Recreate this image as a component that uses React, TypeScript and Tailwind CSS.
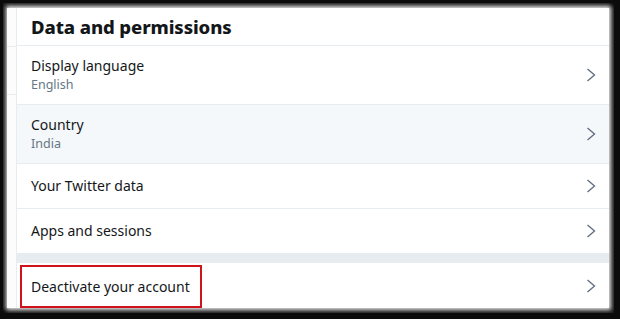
const rows = [
  { title: "Display language", sub: "English", tall: true },
  { title: "Country", sub: "India", tall: true, active: true },
  { title: "Your Twitter data" },
  { title: "Apps and sessions" },
];

const Chevron = () => (
  <svg width="10" height="14" viewBox="0 0 10 14" fill="none" className="shrink-0">
    <polyline points="1.5,1 8.5,7 1.5,13" stroke="#657080" strokeWidth="1.4" />
  </svg>
);

const App = () => {
  return (
    <div className="w-[620px] h-[319px] bg-[#0b0b0b] pt-[3px] pl-[3px] pr-[6px] pb-[6px] flex font-['Noto_Sans',sans-serif]">
      <div className="flex-1 flex bg-[#efefef] pt-[5px] pl-[4px] pr-[5px] pb-[5px] shadow-[inset_3px_3px_4px_rgba(0,0,0,0.9),inset_-3px_-3px_4px_rgba(0,0,0,0.9)] overflow-hidden">
        {/* left page strip */}
        <div className="w-[9px] bg-[#fcfcfc] flex flex-col">
          <div className="h-[39px] border-b border-[#e6ecf0]" />
          <div className="h-[48px] border-b border-[#e6ecf0]" />
        </div>

        {/* panel */}
        <div className="flex-1 flex flex-col bg-white border-l border-[#e6ecf0]">
          <div className="h-[38px] flex items-center px-[14px] border-b border-[#e6ecf0]">
            <h2 className="text-[18.5px] font-extrabold text-[#14171a] tracking-[-0.1px]">Data and permissions</h2>
          </div>

          {rows.map((r) => (
            <div
              key={r.title}
              className={`flex items-center justify-between pl-[14px] pr-[13px] border-b border-[#e6ecf0] ${
                r.tall ? "h-[59px]" : "h-[45px]"
              } ${r.active ? "bg-[#f5f8fa]" : "bg-white"}`}
            >
              <div className="flex flex-col">
                <span className="text-[14px] text-[#14171a] leading-[20px]">{r.title}</span>
                {r.sub && <span className="text-[12.5px] text-[#657786] leading-[18px]">{r.sub}</span>}
              </div>
              <Chevron />
            </div>
          ))}

          <div className="h-[9px] bg-[#e6ecf0]" />

          <div className="flex-1 flex items-center justify-between pr-[13px] bg-white">
            <div className="ml-[3px] mt-[2px] h-[43px] w-[182px] border-2 border-[#d0121b] flex items-center pl-[9px]">
              <span className="text-[14px] text-[#14171a]">Deactivate your account</span>
            </div>
            <Chevron />
          </div>
        </div>
      </div>
    </div>
  );
};

export default App;
